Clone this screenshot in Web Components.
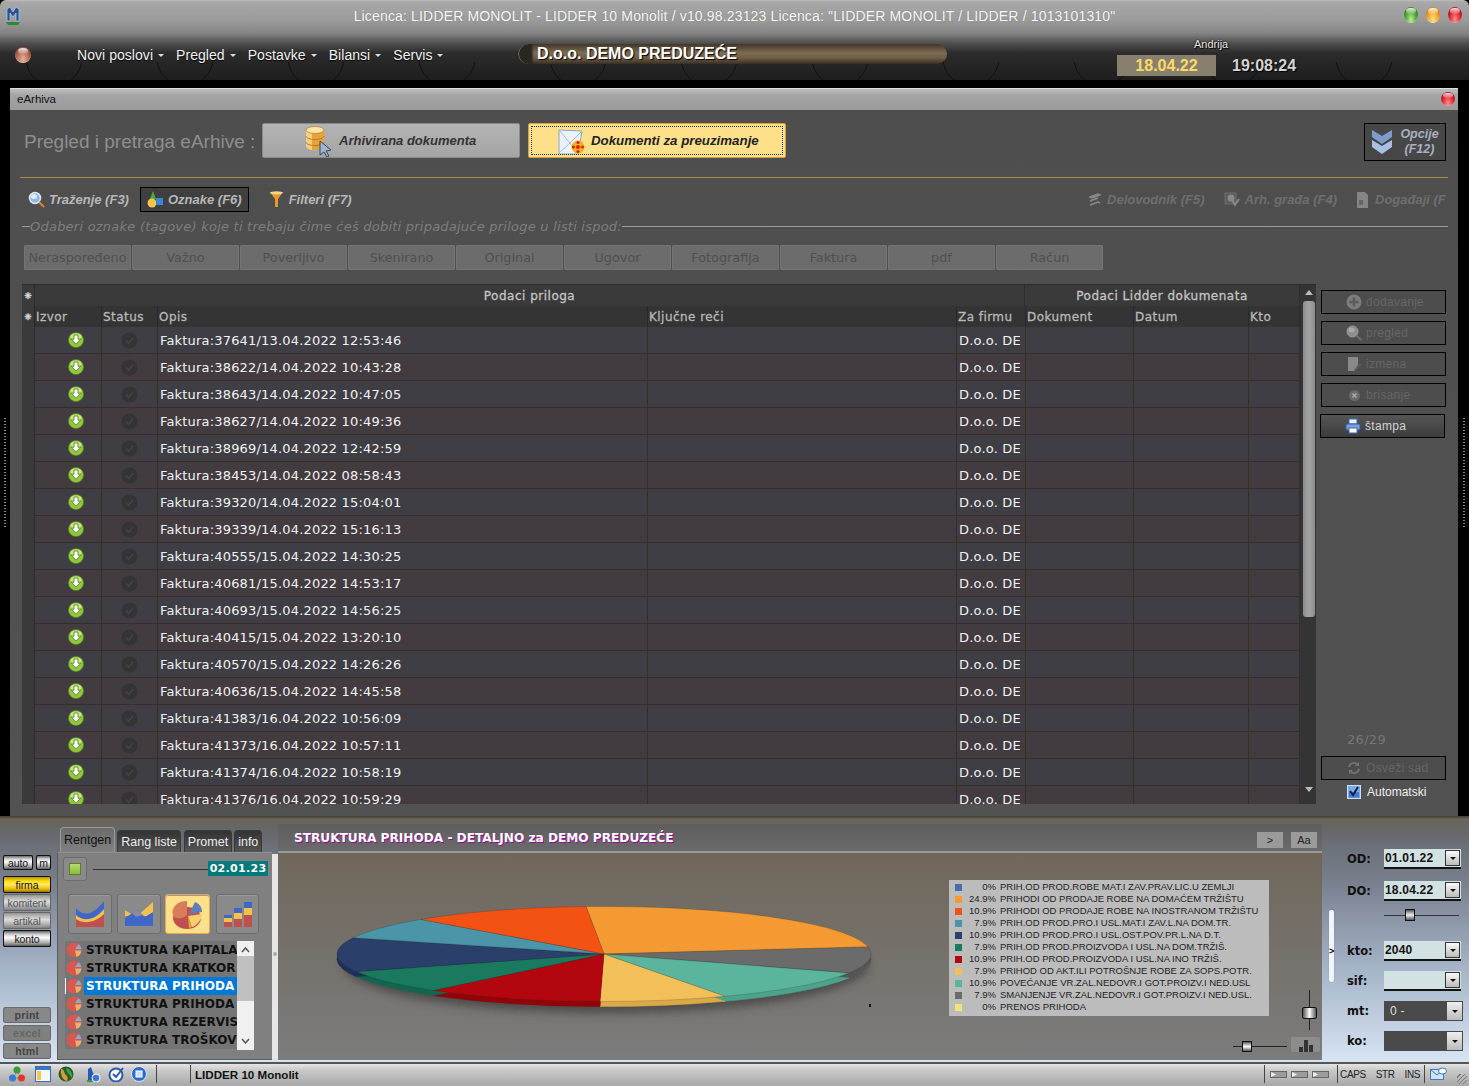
<!DOCTYPE html>
<html><head><meta charset="utf-8"><title>LIDDER</title>
<style>html,body{margin:0;padding:0;background:#000}body{width:1469px;height:1086px;overflow:hidden;font-family:"Liberation Sans",sans-serif}</style>
</head><body>
<x-app></x-app>
<script>
const LS='"Liberation Sans",Arial,sans-serif',DV='"DejaVu Sans",Verdana,sans-serif';
const def=(name,css,html)=>customElements.define(name,class extends HTMLElement{connectedCallback(){if(this.shadowRoot)return;this.attachShadow({mode:'open'}).innerHTML=`<style>:host{display:block;box-sizing:border-box}*{box-sizing:border-box}${css}</style>`+(typeof html==='function'?html(this):html)}});
const I={
logo:`<svg width="16" height="20" viewBox="0 0 16 20"><path d="M2 3l3-2 3 5 3-5 3 2v12h-3V7L8 11 5 7v8H2z" fill="#2a4f90" stroke="#a8c4e4" stroke-width=".8"/><path d="M1 16h14l-2 3H3z" fill="#2d8a32"/></svg>`,
dl:`<svg width="16" height="16" viewBox="0 0 16 16"><circle cx="8" cy="8" r="7.6" fill="#8fc83a" stroke="#54801c" stroke-width=".7"/><ellipse cx="8" cy="4.6" rx="5.6" ry="3.2" fill="#c9e883"/><path d="M6 3h4v4.2h2.6L8 12.2 3.4 7.2H6z" fill="#fff" stroke="#4c7a18" stroke-width=".8"/></svg>`,
st:`<svg width="17" height="17" viewBox="0 0 17 17"><circle cx="8.5" cy="8.5" r="8" fill="#343436"/><path d="M5.2 8.500l2.400 2.800L12 6" fill="none" stroke="#444" stroke-width="1.500"/></svg>`,
db:`<svg width="34" height="32" viewBox="0 0 34 32"><path d="M3 5v16c0 2 4 4 9 4s9-2 9-4V5z" fill="#e8a23c"/><path d="M3 5v16c0 2 4 4 6 4V8z" fill="#f6cf85"/><ellipse cx="12" cy="5" rx="9" ry="3.5" fill="#fbe3a8" stroke="#b97a20" stroke-width=".7"/><path d="M3 11c0 2 4 3.5 9 3.5s9-1.500 9-3.500M3 17c0 2 4 3.500 9 3.500s9-1.500 9-3.500" fill="none" stroke="#b97a20"/><path d="M17 16v14l4-3 3 5 2-1-3-5 5-1z" fill="#9fb4d0" stroke="#39465a" stroke-width="1"/></svg>`,
env:`<svg width="30" height="28" viewBox="0 0 30 28"><path d="M2 3l23 1-4 23H2z" fill="#eaf3fb" stroke="#8ca6c4"/><path d="M2 3l11 13 12-12M2 26l11-10 8 11" fill="none" stroke="#a8bdd6"/><circle cx="21" cy="20" r="6.500" fill="#f5b21a"/><g fill="#d8231a"><circle cx="21" cy="15.500" r="1.600"/><circle cx="21" cy="24.500" r="1.600"/><circle cx="16.500" cy="20" r="1.600"/><circle cx="25.500" cy="20" r="1.600"/><circle cx="21" cy="20" r="2"/></g></svg>`,
opc:`<svg width="24" height="28" viewBox="0 0 24 28"><path d="M2 2l10 6 10-6v7l-10 7L2 9z" fill="#7e9ccc"/><path d="M2 12l10 6 10-6v7l-10 7-10-7z" fill="#a8c0e4"/></svg>`,
mag:`<svg width="17" height="17" viewBox="0 0 17 17"><circle cx="7" cy="7" r="5.500" fill="#8fb8e4" stroke="#dfe9f4" stroke-width="1.500"/><ellipse cx="6" cy="5.500" rx="3" ry="2.500" fill="#dcecff"/><path d="M11 11l5 5" stroke="#d88a30" stroke-width="2"/></svg>`,
tag:`<svg width="17" height="17" viewBox="0 0 17 17"><path d="M6 0l3 8H3z" fill="#4caa3c"/><circle cx="5" cy="12" r="4.500" fill="#f3c64a"/><rect x="9" y="7" width="7" height="7" fill="#3a86d8"/></svg>`,
fun:`<svg width="13" height="17" viewBox="0 0 13 17"><path d="M0 1h13L8 8v8H5V8z" fill="#e8982a"/><ellipse cx="6.500" cy="1.800" rx="6.500" ry="1.600" fill="#f8d68a"/></svg>`,
dvd:`<svg width="14" height="14" viewBox="0 0 14 14"><g fill="none" stroke="#8a8a8a" stroke-width="1.500"><path d="M2 4l8-3 2 1-8 3zM2 8l8-3M2 12l8-3 2 1"/></g></svg>`,
arh:`<svg width="16" height="16" viewBox="0 0 16 16"><rect x="1" y="1" width="11" height="11" fill="#5c5c5c" stroke="#6e6e6e"/><circle cx="7" cy="6" r="3.500" fill="#8a8a8a"/><path d="M8 8l3 5 4-6" fill="none" stroke="#8a8a8a" stroke-width="2"/></svg>`,
dog:`<svg width="13" height="16" viewBox="0 0 13 16"><path d="M1 0h8l3 3v13H1z" fill="#858585"/><rect x="3" y="8" width="4" height="5" fill="#666"/></svg>`,
add:`<svg width="16" height="16" viewBox="0 0 16 16"><circle cx="8" cy="8" r="7.500" fill="#7c7c7c"/><path d="M8 3.500v9M3.500 8h9" stroke="#5c5c5c" stroke-width="2.600"/></svg>`,
prg:`<svg width="16" height="16" viewBox="0 0 16 16"><circle cx="6.500" cy="6.500" r="5.500" fill="#8e8e8e" stroke="#9a9a9a"/><ellipse cx="5.500" cy="5" rx="3" ry="2.200" fill="#aaa"/><path d="M10.500 10.500l5 5" stroke="#6b6b6b" stroke-width="2"/></svg>`,
izm:`<svg width="15" height="16" viewBox="0 0 15 16"><path d="M1 1h10v8l-4 6H1z" fill="#8a8a8a"/><path d="M7 14l6-7 1.500 1.500-6 6.500z" fill="#5c5c5c"/></svg>`,
bri:`<svg width="13" height="13" viewBox="0 0 13 13"><circle cx="6.500" cy="6.500" r="5.500" fill="#6a6a6a"/><path d="M4.500 4.500l4 4M8.500 4.500l-4 4" stroke="#aaa" stroke-width="1.500"/></svg>`,
prt:`<svg width="16" height="16" viewBox="0 0 16 16"><rect x="4" y="1" width="8" height="5" fill="#eef3fa" stroke="#3a6cb4"/><rect x="1" y="6" width="14" height="6" rx="1" fill="#7aa0d8" stroke="#2c5aa0"/><rect x="4" y="10" width="8" height="5" fill="#fff" stroke="#3a6cb4"/></svg>`,
rfr:`<svg width="14" height="14" viewBox="0 0 14 14"><path d="M2 6a5 5 0 0 1 9-2M12 8a5 5 0 0 1-9 2" fill="none" stroke="#747474" stroke-width="1.800"/><path d="M12 1v4H8zM2 13V9h4z" fill="#747474"/></svg>`,
chk:`<svg width="14" height="14" viewBox="0 0 14 14"><rect x=".5" y=".5" width="13" height="13" fill="#7aa8e8" stroke="#cfe0f6"/><rect x="2" y="7" width="10" height="5.500" fill="#3f7ccc"/><path d="M3 6l3 4 5-8" fill="none" stroke="#10204a" stroke-width="2"/></svg>`,
wave:`<svg width="30" height="28" viewBox="0 0 30 28"><path d="M1 8c8 10 18 6 28-7v26H1z" fill="#3f66c8"/><path d="M1 15c9 8 20 4 28-6v18H1z" fill="#f4c14d"/><path d="M1 19c9 6 20 3 28-5v13H1z" fill="#c0504d"/></svg>`,
area:`<svg width="30" height="26" viewBox="0 0 30 26"><path d="M1 9l11 7L29 1v14H1z" fill="#f4c14d"/><path d="M1 17l12-8 8 7 8-5v14H1z" fill="#3f66c8"/><path d="M8 12l5-3 6 5-7 2z" fill="#8a8aa0"/></svg>`,
pie:`<svg width="32" height="32" viewBox="0 0 32 32"><ellipse cx="15" cy="20" rx="14" ry="11" fill="#c0504d"/><path d="M15 17V3A14 11 0 0 0 1 17c0 3 8 6 14 0z" fill="#d97c5a"/><path d="M17 16l6-12c5 2 7 6 7 10z" fill="#5f7fb8"/><path d="M16 18l14-2c0 6-6 12-10 13z" fill="#f6d06f"/><path d="M16 18l4 11-3 1z" fill="#e0a83a"/></svg>`,
bars:`<svg width="30" height="26" viewBox="0 0 30 26"><g><rect x="1" y="14" width="8" height="3" fill="#3f66c8"/><rect x="1" y="17" width="8" height="4" fill="#f4c14d"/><rect x="1" y="21" width="8" height="5" fill="#c0504d"/><rect x="11" y="7" width="8" height="5" fill="#3f66c8"/><rect x="11" y="12" width="8" height="6" fill="#f4c14d"/><rect x="11" y="18" width="8" height="8" fill="#c0504d"/><rect x="21" y="1" width="8" height="6" fill="#3f66c8"/><rect x="21" y="7" width="8" height="7" fill="#f4c14d"/><rect x="21" y="14" width="8" height="12" fill="#c0504d"/></g></svg>`,
li:`<svg width="16" height="16" viewBox="0 0 16 16"><circle cx="8" cy="8" r="7.500" fill="#d8584e"/><path d="M9 7l3.500-5A7.500 7.500 0 0 1 15.500 7z" fill="#8fa8cc"/><path d="M9 8.500h6.400A7.500 7.500 0 0 1 10.500 15z" fill="#e8b070"/></svg>`,
b3:`<svg width="16" height="12" viewBox="0 0 16 12"><rect x="1" y="7" width="4" height="5" fill="#333"/><rect x="6" y="0" width="4" height="12" fill="#333"/><rect x="11" y="5" width="4" height="7" fill="#333"/></svg>`,
s1:`<svg width="16" height="16" viewBox="0 0 16 16"><path d="M8 5L4 12M8 5l4 7M4 12h8" stroke="#888"/><circle cx="8" cy="4" r="3.500" fill="#3a9a34"/><circle cx="3.500" cy="12" r="3.500" fill="#3a78d8"/><circle cx="12.500" cy="12" r="3.500" fill="#d83a2a"/></svg>`,
s2:`<svg width="16" height="16" viewBox="0 0 16 16"><rect x=".5" y=".5" width="15" height="15" fill="#f4f8fc" stroke="#3a6cb4"/><rect x="1" y="1" width="14" height="3" fill="#3a78c8"/><rect x="2" y="5" width="4" height="9" fill="#f4c84a"/></svg>`,
s3:`<svg width="16" height="16" viewBox="0 0 16 16"><circle cx="8" cy="8" r="7.500" fill="#2a5a2a"/><path d="M3 3c4 0 3 5 5 6s2 5 1 6c-3 0-7-5-6-12z" fill="#d89a3a"/><path d="M8 2c4 1 7 5 6 10L9 6z" fill="#3aa83a"/></svg>`,
s4:`<svg width="16" height="16" viewBox="0 0 16 16"><path d="M3 15V3l3-2 2 6 2 2v6z" fill="#2a5ab0"/><path d="M2 15h7" stroke="#3a9a34" stroke-width="2"/><circle cx="11" cy="12" r="4" fill="#3a78d8" stroke="#fff"/></svg>`,
s5:`<svg width="16" height="16" viewBox="0 0 16 16"><circle cx="8" cy="9" r="6.500" fill="#fff" stroke="#2a5ab0" stroke-width="2"/><path d="M5 8l3 3 7-9" fill="none" stroke="#2a5ab0" stroke-width="2"/></svg>`,
s6:`<svg width="16" height="16" viewBox="0 0 16 16"><circle cx="8" cy="8" r="7.500" fill="#2a6cd0" stroke="#dfe8f4"/><rect x="5" y="5" width="6" height="6" fill="#c8dcf4" stroke="#fff"/></svg>`,
msg:`<svg width="17" height="15" viewBox="0 0 17 15"><rect x=".5" y="2.500" width="13" height="10" fill="#cfe2f6" stroke="#3a78c8"/><path d="M1 3l6 5 6-5" fill="none" stroke="#3a78c8"/><ellipse cx="12.500" cy="4" rx="4" ry="3" fill="#fff" stroke="#3a78c8"/></svg>`,
pan:`<svg width="17" height="7" viewBox="0 0 17 7"><rect x=".5" y=".5" width="16" height="6" fill="#9c9c9c" stroke="#666"/><path d="M1 1l5 2.500-5 2.500z" fill="#eee"/></svg>`
};
def('x-ico',':host{display:inline-flex;flex:none}svg{display:block}',h=>I[h.getAttribute('n')]);
def('x-orb',':host{display:inline-block;flex:none;border-radius:50%}',h=>{const c=h.getAttribute('c').split(',');const [w,t]=h.getAttribute('s').split('x');return `<style>:host{width:${w}px;height:${t}px;background:radial-gradient(ellipse at 50% 78%,${c[0]} 0,${c[1]} 55%,${c[2]} 100%);box-shadow:inset 0 -1px 1px rgba(255,255,255,.35)}div{margin:1px auto 0;width:65%;height:40%;border-radius:50%;background:linear-gradient(rgba(255,255,255,.85),rgba(255,255,255,.1))}</style><div></div>`});

/* ---------- top frame ---------- */
def('x-menu-item',`:host{display:flex;align-items:center;gap:5px;color:#f2f2f2;font:14px ${LS};letter-spacing:.05px;text-shadow:0 1px 1px #000;white-space:nowrap}i{width:0;height:0;border:3px solid transparent;border-top:3px solid #ddd;border-bottom:0}`,`<span><slot></slot></span><i></i>`);
def('x-top',`:host{height:80px;flex:none;position:relative;border-radius:6px 6px 0 0;background:linear-gradient(#bdbdbd 0,#a8a8a8 2px,#9b9b9b 20px,#848484 33px,#505050 43px,#2c2c2c 53px,#1e1e1e 80px);overflow:hidden}
.rings{position:absolute;left:0;top:0}
.row1{position:relative;height:32px;display:flex;align-items:center;justify-content:center;color:#f8f8f8;font:14px ${LS};letter-spacing:.16px;text-shadow:0 0 1px #777;white-space:nowrap}
.logo{position:absolute;left:5px;top:6px}
.btns{position:absolute;right:7px;top:7px;display:flex;gap:8px}
.row2{position:relative;height:48px;display:flex}
.menu{width:518px;flex:none;display:flex;align-items:center;height:46px;padding-left:15px}
.menu x-orb{margin-right:46px}
.m{display:flex;gap:12px}
.pill{width:429px;height:20px;margin-top:12px;border-radius:10px;background:linear-gradient(90deg,#2a2620 0,#2a2620 13px,rgba(42,38,32,0) 16px),linear-gradient(#413729,#7d6d53 45%,#6d5d45 70%,#382e22);box-shadow:inset 1px 0 0 #77705f;padding-left:19px;font:bold 16px/20px ${LS};color:#fff;text-shadow:1px 1px 1px #000;white-space:nowrap}
.usr{margin-left:170px;width:200px;position:relative}
.nm{position:absolute;left:77px;top:6px;font:11px ${LS};color:#e8e8e8;text-shadow:0 0 2px #000,1px 1px 1px #000}
.d{display:flex;margin-top:23px;align-items:center}
.dt{width:99px;height:21px;background:#88806f;color:#ffd966;font:bold 16px/21px ${LS};text-align:center}
.tm{margin-left:16px;font:bold 16px ${LS};color:#d4d4d4;text-shadow:1px 1px 1px #000}`,
()=>{let r='';for(let k=0;k<11;k++){r+=`<circle cx="${54+131*k}" cy="58" r="28" fill="none" stroke="#111" stroke-width="1"/>`}
return `<svg class="rings" width="1469" height="80"><defs><clipPath id="cl"><rect y="62" width="1469" height="18"/></clipPath></defs><g clip-path="url(#cl)">${r}</g></svg>
<div class="row1"><span class="logo"><x-ico n="logo"></x-ico></span><span>Licenca: LIDDER MONOLIT - LIDDER 10 Monolit / v10.98.23123 Licenca: "LIDDER MONOLIT / LIDDER / 1013101310"</span>
<div class="btns"><x-orb s="14x16" c="#b8f090,#4aa030,#1f5a18"></x-orb><x-orb s="14x16" c="#ffe090,#f0a020,#a05a08"></x-orb><x-orb s="14x16" c="#ff9090,#d82030,#7a0810"></x-orb></div></div>
<div class="row2"><div class="menu"><x-orb s="16x16" c="#e8b098,#b06850,#5a3020"></x-orb><div class="m"><x-menu-item>Novi poslovi</x-menu-item><x-menu-item>Pregled</x-menu-item><x-menu-item>Postavke</x-menu-item><x-menu-item>Bilansi</x-menu-item><x-menu-item>Servis</x-menu-item></div></div>
<div class="pill">D.o.o. DEMO PREDUZEĆE</div>
<div class="usr"><span class="nm">Andrija</span><div class="d"><div class="dt">18.04.22</div><div class="tm">19:08:24</div></div></div></div>`});

/* ---------- eArhiva ---------- */
def('x-bigbtn',`:host{width:258px;height:35px;display:flex;align-items:center;border:1px solid #8a8a8a;border-radius:2px;background:linear-gradient(#b4b4b4,#a4a4a4);font:italic bold 13px ${LS};color:#333;padding-left:40px;gap:2px}
:host([on]){background:#ffe08a;border-color:#d8a040;color:#222;outline:1px dotted #333;outline-offset:-4px;padding-left:28px;gap:4px;font-size:13.300px}`,`<slot></slot>`);
def('x-tb',`:host{display:flex;align-items:center;gap:4px;height:25px;font:italic bold 13px ${LS};color:#b8b8b8;white-space:nowrap}
:host([on]){border:1px solid #000;padding:0 6px;background:#3f3f3f}:host([off]){color:#6e6e6e}`,`<slot></slot>`);
def('x-tag',`:host{width:107px;height:25px;border-radius:2px;background:#6c6c6c;color:#4f4f4f;font:12.800px/25px ${DV};text-align:center;box-shadow:inset 0 0 0 1px #747474;white-space:nowrap;overflow:hidden}`,`<slot></slot>`);
def('x-sbtn',`:host{width:125px;height:24px;border:1px solid #000;display:flex;align-items:center;padding-left:24px;gap:4px;font:12px ${LS};letter-spacing:.3px;color:#666;background:#4d4d4d}
:host([on]){color:#d4d4d4;background:linear-gradient(#555,#3c3c3c)}::slotted(x-ico){width:16px;justify-content:center}`,`<slot></slot>`);
def('x-row',`:host{display:grid;grid-template-columns:13px 67px 56px 490px 309px 69px 108px 115px 51px;height:27px;font:13px/27px ${DV};letter-spacing:.18px;color:#f2f2f2}
div{border-bottom:1px solid #362e28;border-right:1px solid #362e28;background:var(--r);overflow:hidden;white-space:nowrap;padding-left:2px}
.c{display:flex;justify-content:center;align-items:center;padding:0}.l{background:#3a3a3a;border-right:1px solid #2c2c2c;border-bottom:0}`,
h=>`<div class="l"></div><div class="c" style="padding-left:15px"><x-ico n="dl"></x-ico></div><div class="c"><x-ico n="st"></x-ico></div><div>Faktura:${h.getAttribute('t')}</div><div></div><div>D.o.o. DE</div><div></div><div></div><div></div>`);
const ROWS='37641/13.04.2022 12:53:46,38622/14.04.2022 10:43:28,38643/14.04.2022 10:47:05,38627/14.04.2022 10:49:36,38969/14.04.2022 12:42:59,38453/14.04.2022 08:58:43,39320/14.04.2022 15:04:01,39339/14.04.2022 15:16:13,40555/15.04.2022 14:30:25,40681/15.04.2022 14:53:17,40693/15.04.2022 14:56:25,40415/15.04.2022 13:20:10,40570/15.04.2022 14:26:26,40636/15.04.2022 14:45:58,41383/16.04.2022 10:56:09,41373/16.04.2022 10:57:11,41374/16.04.2022 10:58:19,41376/16.04.2022 10:59:29'.split(',');
def('x-grid',`:host{width:1294px;height:520px;background:#363636;border-top:1px solid #2c2c2c;display:flex;overflow:hidden}
.t{width:1278px;flex:none}
.h{display:grid;grid-template-columns:13px 990px 275px;height:21px;background:#3a3a3a;font:12px/22px ${DV};color:#c4c4c4;letter-spacing:.5px;-webkit-text-stroke:.3px #c4c4c4}
.h>div{text-align:center;border-right:1px solid #2e2e2e}
.h2{display:grid;grid-template-columns:13px 67px 56px 490px 309px 69px 108px 115px 51px;height:21px;background:#343434;font:12px/22px ${DV};color:#b8b8b8;letter-spacing:.45px;-webkit-text-stroke:.3px #b8b8b8;white-space:nowrap}
.h2>div{padding-left:1px;border-right:1px solid #2a2a2a;overflow:hidden}
.s{padding:0!important;text-align:center;color:#ddd;background:#3a3a3a;letter-spacing:0}
.rows{height:477px;overflow:hidden}
.sb{flex:1;position:relative;display:flex;flex-direction:column;align-items:center;padding-left:2px;background:#343434}
.up,.dn{width:0;height:0;border:4px solid transparent}
.up{border-bottom:5px solid #bbb;border-top:0;margin-top:5px}
.th{width:12px;height:316px;margin-top:6px;background:linear-gradient(90deg,#8c8c8c,#a4a4a4,#8c8c8c);border-radius:3px}
.dn{border-top:5px solid #bbb;border-bottom:0;margin-top:170px}`,
()=>`<div class="t"><div class="h"><div class="s">⁕</div><div>Podaci priloga</div><div>Podaci Lidder dokumenata</div></div>
<div class="h2"><div class="s">⁕</div><div>Izvor</div><div>Status</div><div>Opis</div><div>Ključne reči</div><div>Za firmu</div><div>Dokument</div><div>Datum</div><div>Kto</div></div>
<div class="rows">${ROWS.map((t,i)=>`<x-row t="${t}" style="--r:${i%2?'#423b40':'#3e3e44'}"></x-row>`).join('')}</div></div>
<div class="sb"><i class="up"></i><div class="th"></div><i class="dn"></i></div>`);
def('x-side',`:host{width:125px;height:520px;margin-left:5px;display:flex;flex-direction:column;padding-top:6px;gap:7px;color:#777}
.sp{flex:1;display:flex;align-items:flex-end;padding:0 0 2px 26px;font:13px ${DV};color:#777;letter-spacing:.3px}
.c{display:flex;align-items:center;gap:6px;padding-left:26px;margin-top:-4px;height:18px;font:12px ${LS};color:#f0f0f0;margin-bottom:3px}
.o{margin-left:-1px}`,
`<x-sbtn><x-ico n="add"></x-ico>dodavanje</x-sbtn><x-sbtn><x-ico n="prg"></x-ico>pregled</x-sbtn><x-sbtn><x-ico n="izm"></x-ico>izmena</x-sbtn><x-sbtn><x-ico n="bri"></x-ico>brisanje</x-sbtn><x-sbtn on class="o"><x-ico n="prt"></x-ico>štampa</x-sbtn><div class="sp">26/29</div><x-sbtn><x-ico n="rfr"></x-ico>Osveži sad</x-sbtn><div class="c"><x-ico n="chk"></x-ico>Automatski</div>`);
def('x-child',`:host{flex:1;height:728px;margin-top:8px;display:flex;flex-direction:column;background:#505050;overflow:hidden}
.tb{height:22px;flex:none;display:flex;align-items:center;justify-content:space-between;padding:0 3px 2px 7px;font:11.500px ${LS};color:#111;background:linear-gradient(#bdbdbd,#a4a4a4 30%,#9a9a9a);border-top:1px solid #ddd}
.b{flex:1;display:flex;flex-direction:column;background:linear-gradient(#4e4e4e,#525252)}
.hd{height:38px;margin-top:13px;display:flex;padding-left:14px;position:relative}
.hd h1{margin:8px 8px 0 0;font:19px ${LS};color:#8e8e8e;width:230px;white-space:nowrap;flex:none}
.hd x-bigbtn+x-bigbtn{margin-left:8px}
.op{position:absolute;right:12px;top:0;width:82px;height:38px;border:1px solid #000;background:#474747;display:flex;align-items:center;padding-left:5px;font:italic bold 12.500px/15px ${LS};color:#a8b0bc;text-align:center}
.op span{flex:1}
.ln{height:1px;background:#a58a58;margin:16px 10px 0 10px;flex:none}
.tr{height:25px;margin:9px 10px 0 18px;display:flex;flex:none;align-items:center}
.tr .sp{flex:1}
.lg{height:14px;margin:7px 10px 0 12px;display:flex;align-items:center;font:italic 13px ${DV};letter-spacing:.23px;color:#7e7e7e;white-space:nowrap;flex:none}
.lg i{height:1px;background:#9a9a9a}
.tg{display:flex;gap:1px;margin:12px 0 0 14px;flex:none}
.mn{display:flex;margin:14px 0 0 12px}`,
()=>`<div class="tb"><span>eArhiva</span><x-orb s="14x14" c="#ff9090,#d82030,#7a0810"></x-orb></div>
<div class="b"><div class="hd"><h1>Pregled i pretraga eArhive :</h1><x-bigbtn><x-ico n="db"></x-ico>Arhivirana dokumenta</x-bigbtn><x-bigbtn on><x-ico n="env"></x-ico>Dokumenti za preuzimanje</x-bigbtn><div class="op"><x-ico n="opc"></x-ico><span>Opcije<br>(F12)</span></div></div>
<div class="ln"></div>
<div class="tr"><x-tb><x-ico n="mag"></x-ico>Traženje (F3)</x-tb><x-tb on style="margin-left:11px"><x-ico n="tag"></x-ico>Oznake (F6)</x-tb><x-tb style="margin-left:21px;gap:6px"><x-ico n="fun"></x-ico>Filteri (F7)</x-tb><div class="sp"></div>
<x-tb off style="gap:5px"><x-ico n="dvd"></x-ico>Delovodnik (F5)</x-tb><x-tb off style="margin-left:19px;gap:5px"><x-ico n="arh"></x-ico>Arh. građa (F4)</x-tb><x-tb off style="margin-left:19px;gap:6px;width:92px"><x-ico n="dog"></x-ico>Događaji (F</x-tb></div>
<div class="lg"><i style="width:8px"></i><span>Odaberi oznake (tagove) koje ti trebaju čime ćeš dobiti pripadajuće priloge u listi ispod:</span><i style="flex:1"></i></div>
<div class="tg">${'Neraspoređeno,Važno,Poverljivo,Skenirano,Original,Ugovor,Fotografija,Faktura,pdf,Račun'.split(',').map(t=>`<x-tag>${t}</x-tag>`).join('')}</div>
<div class="mn"><x-grid></x-grid><x-side></x-side></div></div>`);
def('x-grip',`:host{width:var(--w);flex:none;display:flex;align-items:center;justify-content:center;height:736px}i{width:2px;height:110px;background:repeating-linear-gradient(#888 0 1px,#000 1px 3px);margin-top:50px}`,`<i></i>`);

/* ---------- bottom ---------- */
def('x-mini',`:host{display:flex;align-items:center;justify-content:center;height:17px;border-radius:2px;font:10.500px ${LS};letter-spacing:-.1px;color:#111;background:linear-gradient(#444,#ccc 25%,#fff 45%,#aaa 75%,#444);box-shadow:0 0 0 1px #111 inset}
:host([y]){background:linear-gradient(#a88000,#ffe000 30%,#ffe770 50%,#eec000 75%,#806000);color:#111}
:host([g]){background:linear-gradient(#888,#bbb 25%,#ddd 45%,#aaa 75%,#777);box-shadow:0 0 0 1px #666 inset;color:#555}
:host([f]){height:16px;background:#888;box-shadow:0 0 0 1px #6a6a6a inset;border-radius:3px;font-weight:bold;color:#444;letter-spacing:.3px}
:host([d]){color:#666;background:#808080}
:host([a]){height:15px}`,`<slot></slot>`);
def('x-lbar',`:host{width:57px;flex:none;padding:39px 6px 0 3px;display:flex;flex-direction:column}
.r{display:flex;gap:3px;margin-bottom:6px}.r x-mini:first-child{flex:1}.r x-mini+x-mini{width:15px}
.g{display:flex;flex-direction:column;gap:1px}.p{margin-top:60px;display:flex;flex-direction:column;gap:2px}`,
`<div class="r"><x-mini a>auto</x-mini><x-mini a>m</x-mini></div><div class="g"><x-mini y>firma</x-mini><x-mini g>komitent</x-mini><x-mini g>artikal</x-mini><x-mini>konto</x-mini></div><div class="p"><x-mini f>print</x-mini><x-mini f d>excel</x-mini><x-mini f>html</x-mini></div>`);
def('x-tab',`:host{height:22px;padding:0 3px;display:flex;align-items:center;margin-top:3px;border-radius:4px 4px 0 0;background:linear-gradient(#333,#555);border:1px solid #3a3a3a;border-bottom:0;font:12.500px ${LS};color:#eee}
:host([on]){height:25px;margin-top:0;background:linear-gradient(#6c6c6c,#808080);color:#111;border-color:#999}`,`<slot></slot>`);
def('x-cbtn',`:host{height:40px;border:1px solid #6c6c6c;border-radius:3px;background:#8a8a8a;display:flex;align-items:center;justify-content:center;box-shadow:inset 0 1px 0 #9a9a9a}
:host([on]){background:#ffe08a;border-color:#e0a850}`,`<slot></slot>`);
def('x-li',`:host{height:18px;display:flex;align-items:center;font:bold 12px ${DV};letter-spacing:.03px;color:#111;white-space:nowrap;background:#757575;position:relative}
span{flex:1;overflow:hidden;padding-left:2px;margin-left:2px;line-height:18px}
:host([s]) span{background:#0078d7;color:#fff}:host([s]) x-ico{box-shadow:-1px 0 0 #fff}
x-ico{margin-left:1px}`,h=>`<x-ico n="li"></x-ico><span><slot></slot></span>`);
def('x-tabs',`:host{width:215px;flex:none;display:flex;flex-direction:column;padding-top:11px}
.st{display:flex;gap:2px;padding-left:3px;height:25px}
.p{height:208px;background:#808080;border-top:1px solid #909090;border-left:1px solid #5c5c5c;border-bottom:1px solid #5c5c5c;padding:4px 0 0 5px}
.tp{display:flex;align-items:center;height:24px}
.pl{width:24px;height:24px;background:#8a8a8a;border:1px solid #6c6c6c;border-radius:3px;display:flex;align-items:center;justify-content:center}
.pl i{width:12px;height:12px;background:linear-gradient(#b8dc70,#88b840);border:1px solid #5a8020}
.tl{width:115px;height:1px;background:#333;margin-left:6px}
.dt{width:60px;height:15px;background:#007a7a;color:#fff;font:bold 11px/15px ${DV};text-align:center;letter-spacing:.3px;margin-bottom:1px}
.cb{display:grid;grid-template-columns:44px 44px 44px 44px;column-gap:5px;margin:13px 0 0 5px;width:192px}
.cb x-cbtn:nth-child(3){margin-left:-1px}.cb x-cbtn:nth-child(4){margin-left:1px}
.ls{display:flex;margin:7px 0 0 2px;height:109px;width:190px;overflow:hidden}
.l{width:172px;overflow:hidden}
.sb{width:17px;background:#f0f0f0;display:flex;flex-direction:column;align-items:center;font:0/0 a}
.sb svg{margin:6px 0 3px}.sb i{width:17px;height:45px;background:#c0c0c0;margin-top:0}.sb .e{flex:1}`,
`<div class="st"><x-tab on>Rentgen</x-tab><x-tab>Rang liste</x-tab><x-tab style="margin-left:1px">Promet</x-tab><x-tab>info</x-tab></div>
<div class="p"><div class="tp"><div class="pl"><i></i></div><div class="tl"></div><div class="dt">02.01.23</div></div>
<div class="cb"><x-cbtn><x-ico n="wave"></x-ico></x-cbtn><x-cbtn><x-ico n="area"></x-ico></x-cbtn><x-cbtn on><x-ico n="pie"></x-ico></x-cbtn><x-cbtn><x-ico n="bars"></x-ico></x-cbtn></div>
<div class="ls"><div class="l"><x-li>STRUKTURA KAPITALA</x-li><x-li>STRUKTURA KRATKOR</x-li><x-li s>STRUKTURA PRIHODA</x-li><x-li>STRUKTURA PRIHODA</x-li><x-li>STRUKTURA REZERVIS</x-li><x-li>STRUKTURA TROŠKOV</x-li></div>
<div class="sb"><svg width="9" height="6"><path d="M1 5l3.500-4L8 5" fill="none" stroke="#555" stroke-width="1.500"/></svg><i></i><div class="e"></div><svg width="9" height="6" style="margin:3px 0 6px"><path d="M1 1l3.500 4L8 1" fill="none" stroke="#555" stroke-width="1.500"/></svg></div></div></div>`);
def('x-split',`:host{width:6px;flex:none;margin-top:38px;height:204px;background:#e6e6e6;display:flex;align-items:center;justify-content:center}i{width:4px;height:4px;border-radius:50%;background:#aaa;margin-top:-4px}`,`<i></i>`);
const PIE=()=>{const cx=604,cy=954,rx=267,ry=47.5;
 const B=[[586,-1],[868,-1],[849,1],[725,1],[600,1],[433,1],[356,1],[353,-1],[421,-1]];
 const C=['#f39a33','#6b6b6b','#5ab59c','#f3bf58','#b4060e','#1a7a60','#2b3f6b','#4a96a8','#f45114'];
 const D=['#b8721e','#555','#4ba38c','#dca948','#8f0509','#126650','#1f305a','#30707e','#b83a0c'];
 const P=B.map(([x,s])=>{const dx=(x-cx)/rx;return [x,cy+s*ry*Math.sqrt(1-dx*dx)]});
 const seg=(dy,cols,st)=>P.map((p,i)=>{const q=P[(i+1)%P.length];return `<path d="M${cx} ${cy+dy}L${p[0]} ${(p[1]+dy).toFixed(1)}A${rx} ${ry} 0 0 1 ${q[0]} ${(q[1]+dy).toFixed(1)}Z" fill="${cols[i]}" stroke="${st?st:cols[i]}" stroke-width=".6"/>`}).join('');
 return `<svg width="1044" height="207" viewBox="278 853 1044 207" style="position:absolute;left:0;top:0"><defs><filter id="b" x="-10%" y="-50%" width="120%" height="200%"><feGaussianBlur stdDeviation="5"/></filter></defs>
 <ellipse cx="606" cy="965" rx="262" ry="48" fill="#3c3c3c" opacity=".75" filter="url(#b)"/>${seg(5,D)}${seg(0,C,'rgba(40,40,40,.35)')}<rect x="869" y="1004" width="2" height="3" fill="#111"/></svg>`};
def('x-lr',`:host{display:grid;grid-template-columns:7px 38px 1fr;height:12px;align-items:center;font:9.500px/12px ${LS};color:#222;white-space:nowrap}
i{width:7px;height:7px}b{font-weight:400;text-align:right;padding-right:4px}`,h=>`<i style="background:${h.getAttribute('c')}"></i><b>${h.getAttribute('p')}</b><span><slot></slot></span>`);
def('x-chart',`:host{width:1044px;flex:none;display:flex;flex-direction:column;padding-top:8px}
.h{height:29px;display:flex;align-items:center;padding-left:16px;background:linear-gradient(#5e5e5e,#6a6a6a);border-bottom:2px solid #9a9a9a;position:relative}
.h b{font:bold 12.200px ${DV};color:#fff;text-shadow:1px 1px 0 #a000a0;white-space:nowrap;letter-spacing:-.05px}
.bt{position:absolute;top:8px;width:26px;height:16px;background:#9a9a9a;color:#222;font:11px/16px ${LS};text-align:center}
.c{position:relative;height:207px;background:linear-gradient(#6f685a,#75706a 45%,#7c7c7c);overflow:hidden}
.lg{position:absolute;left:671px;top:27px;width:320px;height:136px;background:#bcbcbc;padding:1px 0 0 6px}
.v{position:absolute;left:1031px;top:137px;width:1px;height:40px;background:#222}
.vt{position:absolute;left:1024px;top:154px;width:15px;height:12px;background:linear-gradient(90deg,#555,#fff,#555);border:1px solid #111;border-radius:2px}
.hz{position:absolute;left:955px;top:193px;width:54px;height:1px;background:#222}
.ht{position:absolute;left:964px;top:188px;width:10px;height:11px;background:linear-gradient(#555,#fff,#555);border:1px solid #111}
.bb{position:absolute;left:1013px;top:184px;width:29px;height:15px;background:#8c8c8c;border-radius:2px;display:flex;align-items:flex-end;justify-content:center}`,
()=>`<div class="h"><b>STRUKTURA PRIHODA - DETALJNO za DEMO PREDUZEĆE</b><div class="bt" style="left:979px">&gt;</div><div class="bt" style="left:1013px">Aa</div></div>
<div class="c">${PIE()}<div class="lg">${[['#4a6aa8','0%','PRIH.OD PROD.ROBE MAT.I ZAV.PRAV.LIC.U ZEMLJI'],['#f39a33','24.9%','PRIHODI OD PRODAJE ROBE NA DOMAĆEM TRŽIŠTU'],['#f45114','10.9%','PRIHODI OD PRODAJE ROBE NA INOSTRANOM TRŽIŠTU'],['#4a96a8','7.9%','PRIH.OD PROD.PRO.I USL.MAT.I ZAV.L.NA DOM.TR.'],['#2b3f6b','10.9%','PRIH.OD PROD.PRO.I USL.OST.POV.PR.L.NA D.T.'],['#1a7a60','7.9%','PRIH.OD PROD.PROIZVODA I USL.NA DOM.TRŽIŠ.'],['#b4060e','10.9%','PRIH.OD PROD.PROIZVODA I USL.NA INO TRŽIŠ.'],['#f3bf58','7.9%','PRIHOD OD AKT.ILI POTROŠNJE ROBE ZA SOPS.POTR.'],['#5ab59c','10.9%','POVEĆANJE VR.ZAL.NEDOVR.I GOT.PROIZV.I NED.USL'],['#6b6b6b','7.9%','SMANJENJE VR.ZAL.NEDOVR.I GOT.PROIZV.I NED.USL.'],['#f0e678','0%','PRENOS PRIHODA']].map(r=>`<x-lr c="${r[0]}" p="${r[1]}">${r[2]}</x-lr>`).join('')}</div>
<div class="v"></div><div class="vt"></div><div class="hz"></div><div class="ht"></div><div class="bb"><x-ico n="b3"></x-ico></div></div>`);
def('x-combo',`:host{display:flex;align-items:center;height:20px;margin-bottom:10px;padding-left:25px;font:bold 11.500px ${LS};color:#111}
label{width:37px;font:bold 11.500px ${DV}}
.b{width:77px;height:20px;background:#d2e2e2;border-bottom:2px solid #111;display:flex;align-items:center;justify-content:space-between;padding:0 1px;font:bold 12px ${LS};color:#111;letter-spacing:.2px}
.b i{width:15px;height:16px;background:linear-gradient(#fafafa,#bbb);border:1px solid #333;display:flex;align-items:center;justify-content:center}
.b i::after{content:"";border:3px solid transparent;border-top:3px solid #111;border-bottom:0}
:host([d]) .b{background:#4a4a4a;border:0;color:#ddd;width:79px;padding-left:6px;font-weight:400}
:host([d]) .b i{background:linear-gradient(#eee,#bbb);border:0;height:18px}`,h=>`<label>${h.getAttribute('l')}</label><div class="b"><span>${h.getAttribute('v')||''}</span><i></i></div>`);
def('x-right',`:host{width:147px;flex:none;padding-top:33px;position:relative}
.sl{height:20px;margin:-7px 0 16px 62px;width:75px;position:relative}
.sl u{position:absolute;left:0;right:0;top:10px;height:1px;background:#333}
.sl i{position:absolute;left:21px;top:4px;width:10px;height:12px;background:linear-gradient(#555,#eee,#555);border:1px solid #111}
.sp{position:absolute;left:7px;top:94px;width:5px;height:72px;background:#f0f6fc;border-radius:2px;box-shadow:0 0 1px #666}
.ar{position:absolute;left:7px;top:130px;font:bold 9px ${LS};color:#000;line-height:10px}`,
`<div class="sp"></div><div class="ar">&gt;</div><x-combo l="OD:" v="01.01.22" style="margin-bottom:12px"></x-combo><x-combo l="DO:" v="18.04.22" style="margin-bottom:11px"></x-combo><div class="sl"><u></u><i></i></div><x-combo l="kto:" v="2040"></x-combo><x-combo l="sif:"></x-combo><x-combo d l="mt:" v="0 -"></x-combo><x-combo d l="ko:"></x-combo>`);
def('x-bottom',`:host{height:246px;flex:none;display:flex;background:linear-gradient(#413a2e 0,#6a6458 3px,#666 12px,#6c7078 30px,#7a8290 70px,#a4b2c6 150px,#d6e4f4 246px)}`,`<x-lbar></x-lbar><x-tabs></x-tabs><x-split></x-split><x-chart></x-chart><x-right></x-right>`);
def('x-status',`:host{height:24px;flex:none;display:flex;align-items:center;padding:0 0 2px 9px;background:linear-gradient(#e4e4e4,#c8c8c8 30%,#a8a8a8);border-top:2px solid #555;font:bold 11.600px ${LS};color:#111;white-space:nowrap}
x-ico{margin-right:7px}.s{width:1px;height:18px;background:#444;flex:none}
.r{font:10px ${LS};letter-spacing:-.4px;color:#222}.sp{flex:1}
.g{width:10px;height:10px;background:repeating-linear-gradient(135deg,transparent 0 2px,#777 2px 3px)}`,
`<x-ico n="s1"></x-ico><x-ico n="s2" style="margin-left:3px"></x-ico><x-ico n="s3"></x-ico><x-ico n="s4" style="margin-left:4px"></x-ico><x-ico n="s5"></x-ico><x-ico n="s6"></x-ico><div class="s" style="margin-left:2px"></div><div class="s" style="margin:0 4px 0 33px"></div><span>LIDDER 10 Monolit</span><div class="sp"></div><div class="s" style="margin-right:5px"></div><x-ico n="pan" style="margin-right:4px"></x-ico><x-ico n="pan" style="margin-right:4px"></x-ico><x-ico n="pan" style="margin-right:8px"></x-ico><div class="s" style="margin-right:2px"></div><span class="r">CAPS</span><span class="r" style="margin-left:10px">STR</span><span class="r" style="margin-left:10px;margin-right:4px">INS</span><div class="s" style="margin-right:5px"></div><x-ico n="msg" style="margin-right:10px"></x-ico><div class="g" style="margin:10px 2px 0 0"></div>`);
def('x-app',`:host{width:1469px;height:1086px;display:flex;flex-direction:column;background:#000;overflow:hidden}
.m{display:flex;height:736px;flex:none}`,`<x-top></x-top><div class="m"><x-grip style="--w:10px"></x-grip><x-child></x-child><x-grip style="--w:11px"></x-grip></div><x-bottom></x-bottom><x-status></x-status>`);
</script>
</body></html>
